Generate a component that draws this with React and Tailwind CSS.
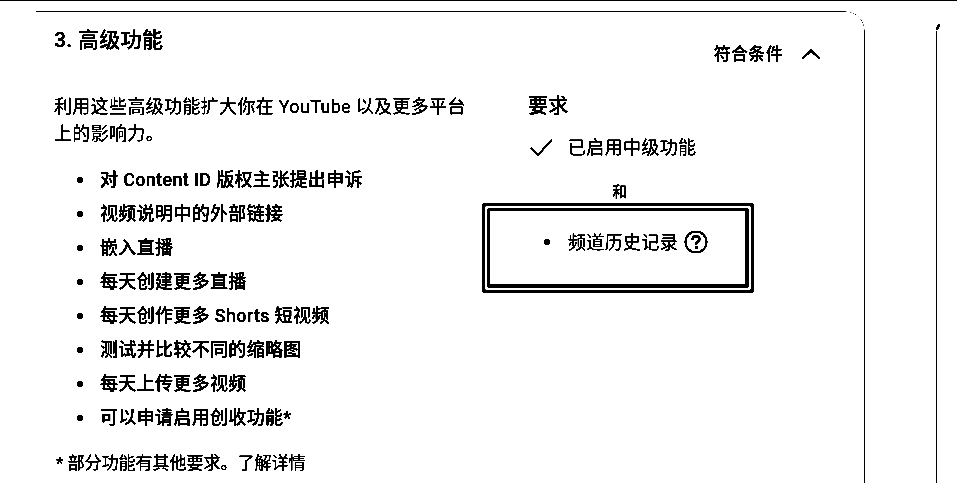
import React from "react";

function Check() {
  return (
    <svg width="24" height="24" viewBox="0 0 24 24" fill="none" stroke="#000" strokeWidth="1.8" className="shrink-0">
      <path d="M3 12 L10 19 L24 3.5" />
    </svg>
  );
}

function Help() {
  return (
    <svg width="24" height="24" viewBox="0 0 24 24" fill="none" stroke="#000" strokeWidth="1.6" className="shrink-0">
      <circle cx="12" cy="12" r="10.5" />
      <path d="M8.5 9.5 C8.5 7.5 10 6.3 12 6.3 C14 6.3 15.5 7.6 15.5 9.3 C15.5 11.8 12 11.8 12 14.8" strokeWidth="2.2" />
      <rect x="11" y="16.3" width="2.4" height="2.4" fill="#000" stroke="none" />
    </svg>
  );
}

const items = [
  "对 Content ID 版权主张提出申诉",
  "视频说明中的外部链接",
  "嵌入直播",
  "每天创建更多直播",
  "每天创作更多 Shorts 短视频",
  "测试并比较不同的缩略图",
  "每天上传更多视频",
  "可以申请启用创收功能*",
];

export default function App() {
  return (
    <div className="w-[957px] h-[483px] overflow-hidden bg-white text-black border-t border-black font-['Roboto','Noto_Sans_CJK_SC',sans-serif] text-[18px] tracking-[0.33px] brightness-[0.65] contrast-[30] grayscale">
      <div className="flex h-full pt-[10px] pl-[36px]">
        <div className="w-[829px] h-[600px] shrink-0 border-t border-r border-[#bbb] rounded-tr-[20px] pl-[18px] pr-[44px] pt-[14px]">
          <div className="flex justify-between">
            <h2 className="text-[21px] leading-7 font-medium">3. 高级功能</h2>
            <div className="flex items-center gap-[19px] mt-[16px] text-[17px] leading-6 font-medium">
              <span>符合条件</span>
              <svg width="18" height="10" viewBox="0 0 18 10" fill="none" stroke="#000" strokeWidth="2">
                <path d="M0.5 9.5 L9 1.5 L17.5 9.5" />
              </svg>
            </div>
          </div>
          <div className="flex mt-[27px]">
            <div className="w-[428px] shrink-0">
              <p className="w-[414px] leading-[27px]">利用这些高级功能扩大你在 YouTube 以及更多平台上的影响力。</p>
              <ul className="mt-[16px]">
                {items.map((t) => (
                  <li key={t} className="flex items-center h-[34px] leading-[34px] font-medium">
                    <span className="w-[6px] h-[6px] rounded-full bg-black ml-[23px] mr-[17px] shrink-0" />
                    {t}
                  </li>
                ))}
              </ul>
              <p className="mt-[16px] pl-[2px] text-[17px] tracking-normal leading-6">* 部分功能有其他要求。了解详情</p>
            </div>
            <div className="flex flex-col w-[272px]">
              <div className="pl-[46px] -mt-[1px] text-[20px] leading-7 font-medium">要求</div>
              <div className="flex items-center gap-[16px] pl-[46px] mt-[14px] leading-7">
                <Check />
                <span>已启用中级功能</span>
              </div>
              <div className="mt-[20px] pl-[4px] text-center text-[15px] leading-5 font-medium">和</div>
              <div className="mt-[1px] h-[90px] border-[3px] border-black rounded-[4px] p-[2px]">
                <div className="h-full border-t-[3px] border-l-[3px] border-r-[4px] border-b-[4px] border-black rounded-[3px] pt-[17px]">
                  <div className="flex items-center h-7 pl-[54px]">
                    <span className="w-[6px] h-[6px] rounded-full bg-black mr-[18px] shrink-0" />
                    <span>频道历史记录</span>
                    <span className="ml-[6px]"><Help /></span>
                  </div>
                </div>
              </div>
            </div>
          </div>
        </div>
        <div className="relative w-[72px] h-[600px] shrink-0 border-r border-black mt-[20px]">
          <span className="absolute right-[-3px] top-[-7px] w-[2px] h-[6px] bg-black rotate-[30deg]" />
        </div>
      </div>
    </div>
  );
}
